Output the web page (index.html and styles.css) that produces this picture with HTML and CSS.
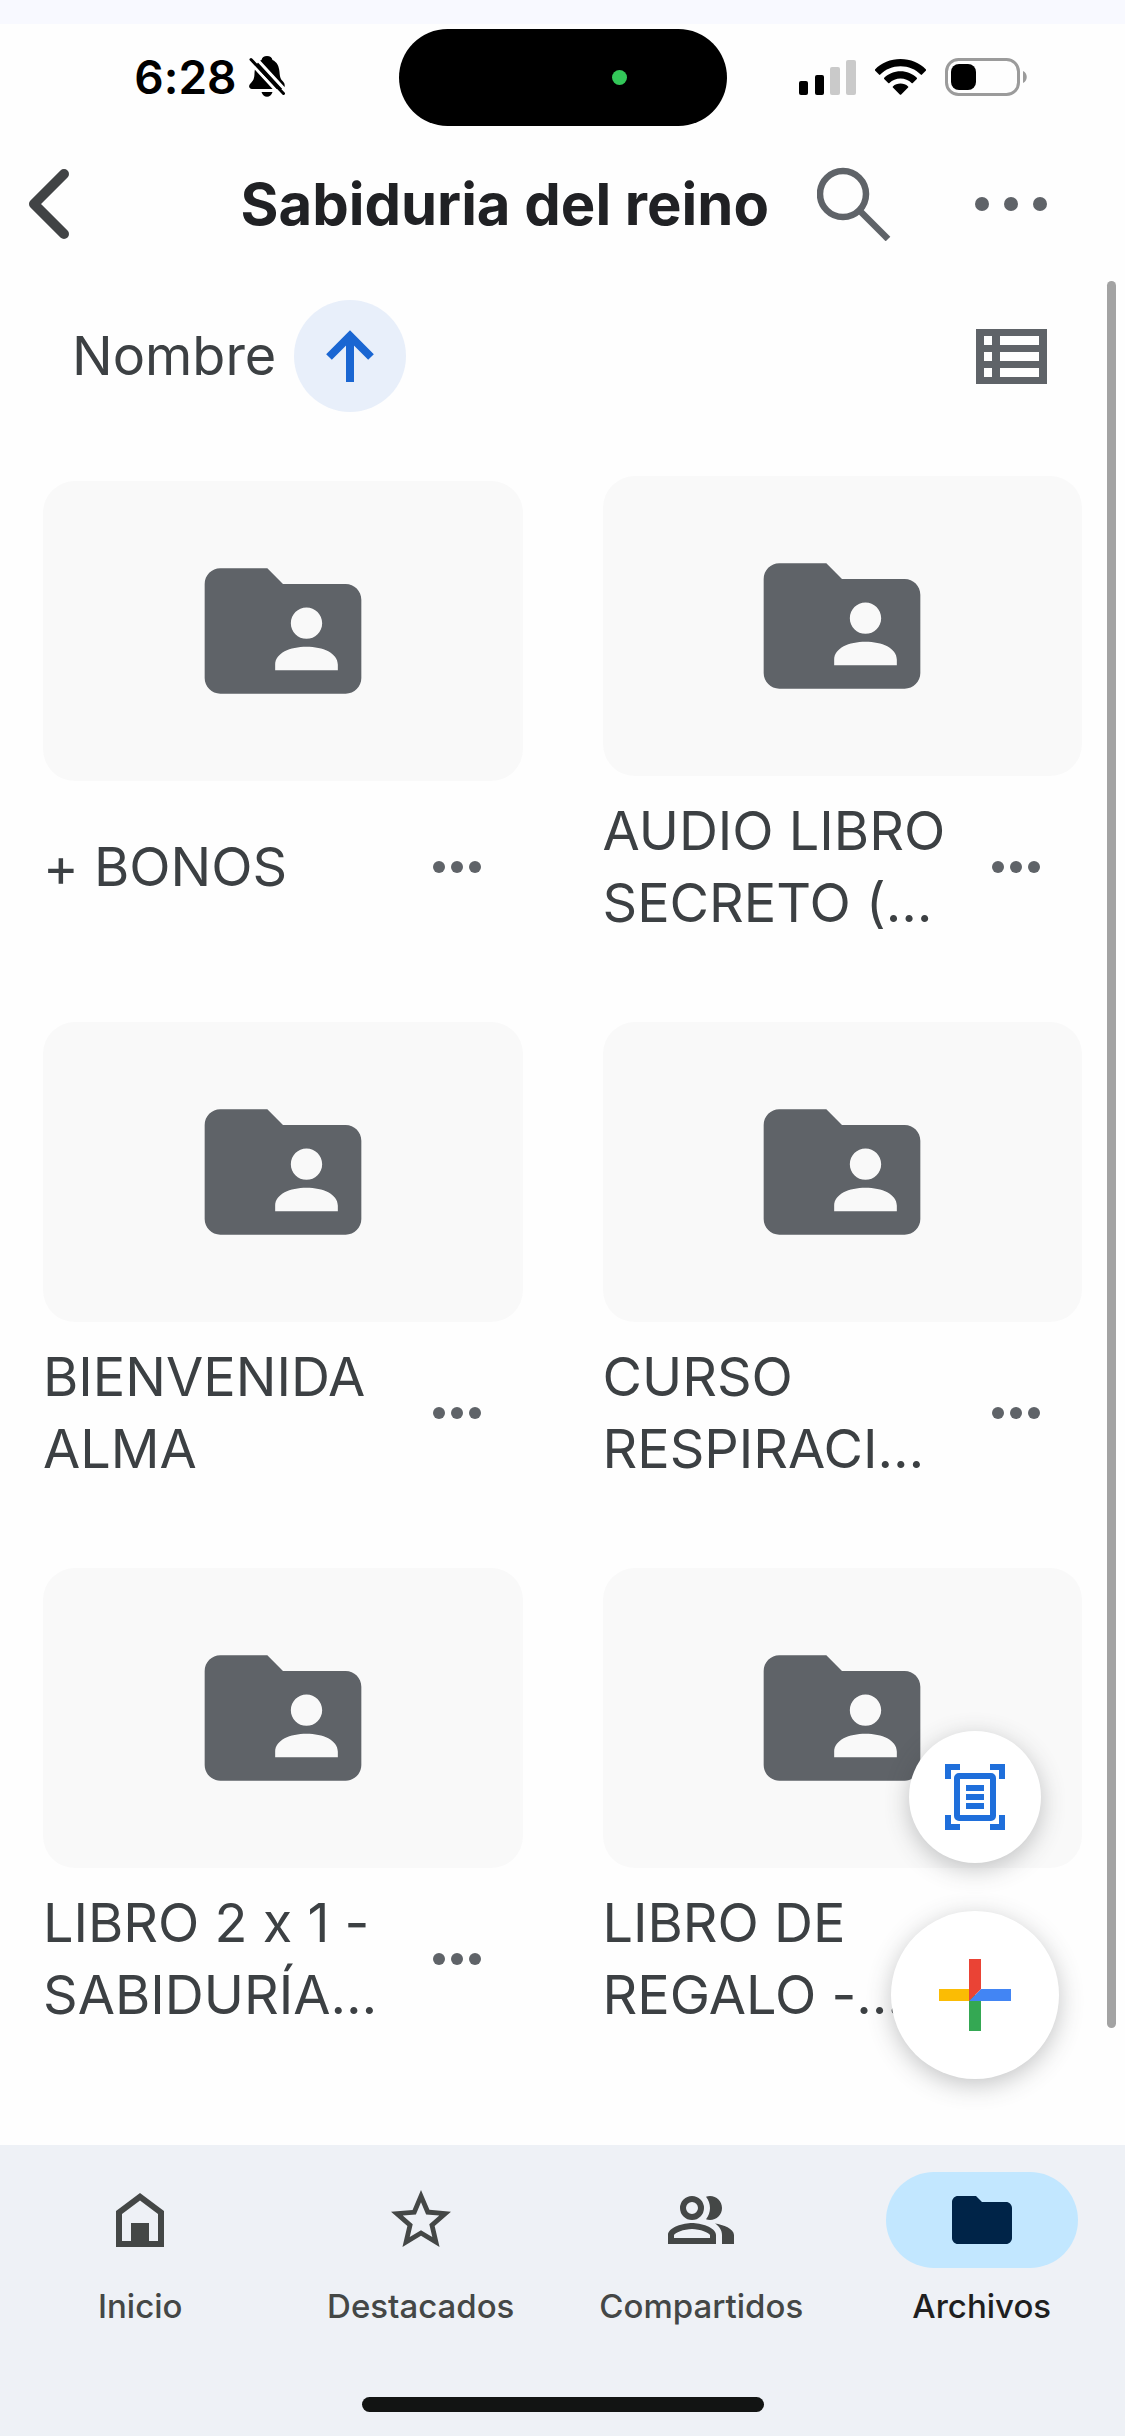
FILE: index.html
```html
<!DOCTYPE html>
<html lang="es">
<head>
<meta charset="utf-8">
<meta name="viewport" content="width=device-width, initial-scale=1">
<title>Sabiduria del reino</title>
<link rel="stylesheet" href="styles.css">
</head>
<body>
<svg class="sprite" width="0" height="0" aria-hidden="true">
  <symbol id="folder-shared" viewBox="0 0 24 24"><path d="M20 6h-8l-2-2H4c-1.1 0-2 .9-2 2v12c0 1.1.9 2 2 2h16c1.100 0 2-.9 2-2V8c0-1.100-.9-2-2-2zm-5 3c1.100 0 2 .9 2 2s-.9 2-2 2-2-.9-2-2 .9-2 2-2zm4 8h-8v-.7c0-1.500 1.900-2.300 4-2.300s4 .8 4 2.300v.7z"/></symbol>
  <symbol id="more" viewBox="0 0 48 12"><circle cx="6" cy="6" r="6"/><circle cx="24" cy="6" r="6"/><circle cx="42" cy="6" r="6"/></symbol>
</svg>

<div class="status">
  <div class="status-left">
    <span class="time">6:28</span>
    <svg width="36" height="41" viewBox="0 0 36 41" aria-hidden="true">
      <path d="M18 0c3 0 5 1.500 5.500 4C28 6 30 10 30.500 16c.4 5 1 7 3.500 9.500 1.500 1.500 2 3.500 1.500 5.500l-1.500 2H3c-3 0-3.700-3-2-5 3-3 4.500-5 4.500-11C6 10 8 6 12.500 4 13 1.500 15 0 18 0z"/>
      <path d="M12.500 36h11c-.8 3-3 4.800-5.500 4.800s-4.700-1.800-5.500-4.800z"/>
      <path d="M0 5L33 41M5 0l33 36" stroke="#fff" stroke-width="3" fill="none"/>
      <path d="M-1-1h10L5 10H-1z" fill="#fff"/>
      <path d="M2 3.500l32.500 34" stroke="#000" stroke-width="3" stroke-linecap="round"/>
    </svg>
  </div>
  <div class="island"><span class="camera-dot"></span></div>
  <div class="status-right">
    <svg width="57" height="36" viewBox="0 0 57 36" aria-hidden="true">
      <rect y="22" width="9" height="14" rx="2"/><rect x="16" y="16" width="9" height="20" rx="2"/>
      <rect x="31" y="8" width="10" height="28" rx="2" fill="#cacaca"/><rect x="47" y="1" width="10" height="35" rx="2" fill="#cacaca"/>
    </svg>
    <svg width="51" height="36" viewBox="0 0 51 36" aria-hidden="true">
      <path d="M25.500 0C35.500 0 44.500 3.800 51 10.500c.3.400.3.800 0 1.100l-4 4c-.4.400-.9.400-1.300 0C40.500 10.300 33.500 7.300 25.500 7.300s-15 3-20.200 8.300c-.4.400-.9.400-1.300 0l-4-4c-.3-.3-.3-.7 0-1.100C6.500 3.800 15.500 0 25.500 0z"/>
      <path d="M25.500 12.300c6.300 0 12 2.400 16.300 6.500.4.300.4.800 0 1.200l-4 4c-.4.300-.9.300-1.200 0-3-2.800-6.900-4.400-11.100-4.400s-8.100 1.600-11.100 4.400c-.3.300-.8.300-1.200 0l-4-4c-.4-.4-.4-.9 0-1.200 4.300-4.100 10-6.500 16.300-6.500z"/>
      <path d="M25.500 24.600c2.900 0 5.500 1 7.600 2.800.4.300.4.800 0 1.200l-6.900 6.900c-.4.400-1 .4-1.400 0l-6.900-6.900c-.4-.4-.4-.9 0-1.200 2.100-1.800 4.700-2.800 7.600-2.800z"/>
    </svg>
    <svg width="83" height="38" viewBox="0 0 83 38" aria-hidden="true">
      <rect x="1.500" y="1.500" width="72" height="35" rx="12" fill="none" stroke="#9b9b9b" stroke-width="3"/>
      <rect x="6" y="6" width="25" height="26" rx="8"/><path d="M78 13c5 2 5 10 0 12z" fill="#9b9b9b"/>
    </svg>
  </div>
</div>

<header class="topbar">
  <button class="icon-btn back" aria-label="Atrás"><svg width="42" height="72" viewBox="0 0 42 72"><path d="M36 6L6 36l30 30" fill="none" stroke="#414345" stroke-width="10" stroke-linecap="round" stroke-linejoin="round"/></svg></button>
  <h1>Sabiduria del reino</h1>
  <button class="icon-btn" aria-label="Buscar"><svg width="74" height="74" viewBox="0 0 74 74"><g fill="none" stroke="#5f6368" stroke-width="6.500"><circle cx="26" cy="27" r="23"/><path d="M42 43l29 29"/></g></svg></button>
  <button class="icon-btn more-top" aria-label="Más opciones"><svg width="72" height="14" viewBox="0 0 72 14"><circle cx="7" cy="7" r="7"/><circle cx="36" cy="7" r="7"/><circle cx="65" cy="7" r="7"/></svg></button>
</header>

<main>
  <div class="sortbar">
    <span class="sort-label" id="sort">Nombre</span>
    <button class="sort-dir" aria-label="Orden ascendente" aria-describedby="sort"><svg width="48" height="52" viewBox="0 0 48 52"><path d="M24 52V6M3 27L24 6l21 21" fill="none" stroke="#1a66d2" stroke-width="8"/></svg></button>
    <button class="icon-btn view" aria-label="Vista de lista"><svg width="71" height="55" viewBox="0 0 71 55"><path fill-rule="evenodd" d="M0 0h71v55H0zM8 7h8v9H8zM24 7h39v9H24zM8 23h8v9H8zM24 23h39v9H24zM8 39h8v9H8zM24 39h39v9H24z"/></svg></button>
  </div>

  <ul class="grid">
    <li class="item"><a class="thumb" href="#" aria-label="+ BONOS"><svg><use href="#folder-shared"/></svg></a><div class="label"><span class="name">+ BONOS</span><button class="icon-btn" aria-label="Más acciones"><svg class="dots"><use href="#more"/></svg></button></div></li>
    <li class="item"><a class="thumb" href="#" aria-label="AUDIO LIBRO SECRETO"><svg><use href="#folder-shared"/></svg></a><div class="label"><span class="name">AUDIO LIBRO SECRETO (…</span><button class="icon-btn" aria-label="Más acciones"><svg class="dots"><use href="#more"/></svg></button></div></li>
    <li class="item"><a class="thumb" href="#" aria-label="BIENVENIDA ALMA"><svg><use href="#folder-shared"/></svg></a><div class="label"><span class="name">BIENVENIDA ALMA</span><button class="icon-btn" aria-label="Más acciones"><svg class="dots"><use href="#more"/></svg></button></div></li>
    <li class="item"><a class="thumb" href="#" aria-label="CURSO RESPIRACI…"><svg><use href="#folder-shared"/></svg></a><div class="label"><span class="name">CURSO RESPIRACI…</span><button class="icon-btn" aria-label="Más acciones"><svg class="dots"><use href="#more"/></svg></button></div></li>
    <li class="item"><a class="thumb" href="#" aria-label="LIBRO 2 x 1"><svg><use href="#folder-shared"/></svg></a><div class="label"><span class="name">LIBRO 2 x 1 - SABIDURÍA…</span><button class="icon-btn" aria-label="Más acciones"><svg class="dots"><use href="#more"/></svg></button></div></li>
    <li class="item"><a class="thumb" href="#" aria-label="LIBRO DE REGALO"><svg><use href="#folder-shared"/></svg></a><div class="label"><span class="name">LIBRO DE REGALO&nbsp;-…</span><button class="icon-btn" aria-label="Más acciones"><svg class="dots"><use href="#more"/></svg></button></div></li>
  </ul>

  <div class="scroll-thumb"></div>
  <div class="fabs">
    <button class="fab scan" aria-label="Escanear"><svg width="60" height="66" viewBox="0 0 60 66"><g fill="none" stroke="#1f6fdb" stroke-width="6"><path d="M15 3H3v12M45 3h12v12M15 63H3V51M45 63h12V51"/><rect x="12" y="12" width="36" height="42" rx="2"/><path d="M21 24h18M21 33h18M21 42h18"/></g></svg></button>
    <button class="fab add" aria-label="Nuevo"><svg width="72" height="72" viewBox="0 0 72 72"><path fill="#34a853" d="M30 36h12v36H30z"/><path fill="#4285f4" d="M30 42l12-12h30v12z"/><path fill="#fbbc04" d="M0 30h36L30 42H0z"/><path fill="#ea4335" d="M30 0h12v30L30 42z"/></svg></button>
  </div>
</main>

<footer>
  <nav>
    <a href="#"><span class="pill"><svg viewBox="0 0 24 24"><path fill-rule="evenodd" d="M4 9l8-6 8 6v12H4zM6 10v9h3v-6h6v6h3v-9l-6-4.500z"/></svg></span>Inicio</a>
    <a href="#"><span class="pill"><svg viewBox="0 0 24 24"><path d="M22 9.240l-7.190-.62L12 2 9.190 8.630 2 9.240l5.460 4.730L5.820 21 12 17.270 18.180 21l-1.630-7.030L22 9.240zM12 15.400l-3.760 2.270 1-4.280-3.320-2.880 4.380-.38L12 6.100l1.710 4.040 4.380.38-3.320 2.880 1 4.280L12 15.400z"/></svg></span>Destacados</a>
    <a href="#"><span class="pill"><svg viewBox="0 0 24 24"><circle cx="9" cy="8" r="3" fill="none" stroke="currentColor" stroke-width="2"/><path fill-rule="evenodd" d="M15 4c-.47 0-.91.100-1.330.24C14.500 5.270 15 6.580 15 8s-.5 2.730-1.330 3.760c.42.14.86.24 1.330.24 2.210 0 4-1.790 4-4s-1.790-4-4-4zM9 13c-2.670 0-8 1.340-8 4v3h16v-3c0-2.660-5.330-4-8-4zM15 18H3v-1C3.200 16.290 6.300 15 9 15s5.800 1.290 6 2zM16.670 13.130C18.040 14.060 19 15.320 19 17v3h4v-3c0-2.180-3.580-3.470-6.330-3.870z"/></svg></span>Compartidos</a>
    <a href="#" class="active" aria-current="page"><span class="pill"><svg viewBox="0 0 24 24"><path d="M10 4H4c-1.100 0-2 .9-2 2v12c0 1.100.9 2 2 2h16c1.100 0 2-.9 2-2V8c0-1.100-.9-2-2-2h-8l-2-2z"/></svg></span>Archivos</a>
  </nav>
  <div class="home-indicator"></div>
</footer>
</body>
</html>
```
FILE: styles.css
```css
* { box-sizing: border-box; }

body {
  margin: 0;
  min-height: 100vh;
  display: flex;
  flex-direction: column;
  background: #fefefe;
  color: #3c4043;
  font-family: Inter, "Liberation Sans", sans-serif;
  font-feature-settings: "calt" 0;
}

svg { display: block; flex: none; }
.sprite { position: absolute; }

button {
  margin: 0;
  padding: 0;
  border: 0;
  font: inherit;
  cursor: pointer;
}

.icon-btn {
  flex: none;
  background: none;
  color: #5f6368;
}
.icon-btn svg { fill: currentColor; }

/* Status bar */
.status {
  display: grid;
  grid-template-columns: 1fr 328px 1fr;
  align-items: center;
  height: 126px;
  border-top: 24px solid #f8f9ff;
  padding-top: 5px;
  color: #000;
}
.status-left,
.status-right {
  display: flex;
  align-items: center;
  padding-bottom: 2px;
}
.status-left { justify-content: flex-end; gap: 12px; padding-right: 114px; }
.status-right { justify-content: flex-end; gap: 19px; padding-right: 97px; }
.time { font-size: 46px; font-weight: 600; line-height: 56px; }
.island {
  display: flex;
  align-items: center;
  justify-content: flex-end;
  height: 97px;
  padding-right: 100px;
  border-radius: 49px;
  background: #000;
}
.camera-dot { width: 15px; height: 15px; border-radius: 50%; background: #33c759; }

/* Title bar */
.topbar {
  display: flex;
  align-items: center;
  height: 155px;
  padding: 0 78px 0 28px;
}
.topbar h1 {
  flex: 1;
  margin: 0 48px 0 0;
  color: #202124;
  font-size: 58px;
  font-weight: 700;
  line-height: 72px;
  text-align: right;
  white-space: nowrap;
}
.more-top { margin-left: 84px; }

/* File list */
main { position: relative; flex: 1; padding-top: 19px; }

.sortbar {
  display: flex;
  align-items: center;
  padding: 0 78px 0 72px;
}
.sort-label { font-size: 54px; line-height: 72px; }
.sort-dir {
  display: grid;
  place-items: center;
  width: 112px;
  height: 112px;
  margin-left: 18px;
  border-radius: 50%;
  background: #e8effa;
}
.view { margin-left: auto; }

.grid {
  display: grid;
  grid-template-columns: 1fr 1fr;
  gap: 64px 80px;
  margin: 64px 43px 0;
  padding: 0;
  list-style: none;
}
.item {
  display: flex;
  flex-direction: column;
  justify-content: center;
}
.thumb {
  display: grid;
  place-items: center;
  height: 300px;
  border-radius: 32px;
  background: #f9f9f9;
}
.thumb svg { width: 188px; height: 188px; fill: #5f6368; }
.label {
  display: flex;
  align-items: center;
  justify-content: space-between;
  min-height: 172px;
  padding: 19px 42px 19px 0;
}
.name { width: 364px; font-size: 54px; line-height: 72px; }
.dots { width: 48px; height: 12px; }

.scroll-thumb {
  position: absolute;
  top: 0;
  right: 9px;
  bottom: 117px;
  width: 9px;
  border-radius: 5px;
  background: #a3a3a3;
}

.fabs {
  position: absolute;
  right: 66px;
  bottom: 66px;
  display: flex;
  flex-direction: column;
  align-items: center;
  gap: 48px;
}
.fab {
  display: grid;
  place-items: center;
  border-radius: 50%;
  background: #fff;
  box-shadow: 0 6px 24px rgba(60, 64, 67, 0.3);
}
.scan { width: 132px; height: 132px; }
.add { width: 168px; height: 168px; }

/* Bottom navigation */
footer { padding: 27px 0 24px; background: #eef1f6; }
nav {
  display: grid;
  grid-template-columns: repeat(4, 1fr);
  padding-right: 3px;
}
nav a {
  display: flex;
  flex-direction: column;
  align-items: center;
  gap: 18px;
  color: #444746;
  font-size: 33px;
  font-weight: 500;
  line-height: 40px;
  text-decoration: none;
}
.pill {
  display: grid;
  place-items: center;
  width: 192px;
  height: 96px;
  border-radius: 48px;
}
.pill svg { width: 72px; height: 72px; fill: currentColor; }
.active { color: #1f1f1f; }
.active .pill { background: #c2e7ff; color: #002448; }
.home-indicator {
  width: 402px;
  height: 15px;
  margin: 71px auto 0;
  border-radius: 8px;
  background: #121413;
}
```
